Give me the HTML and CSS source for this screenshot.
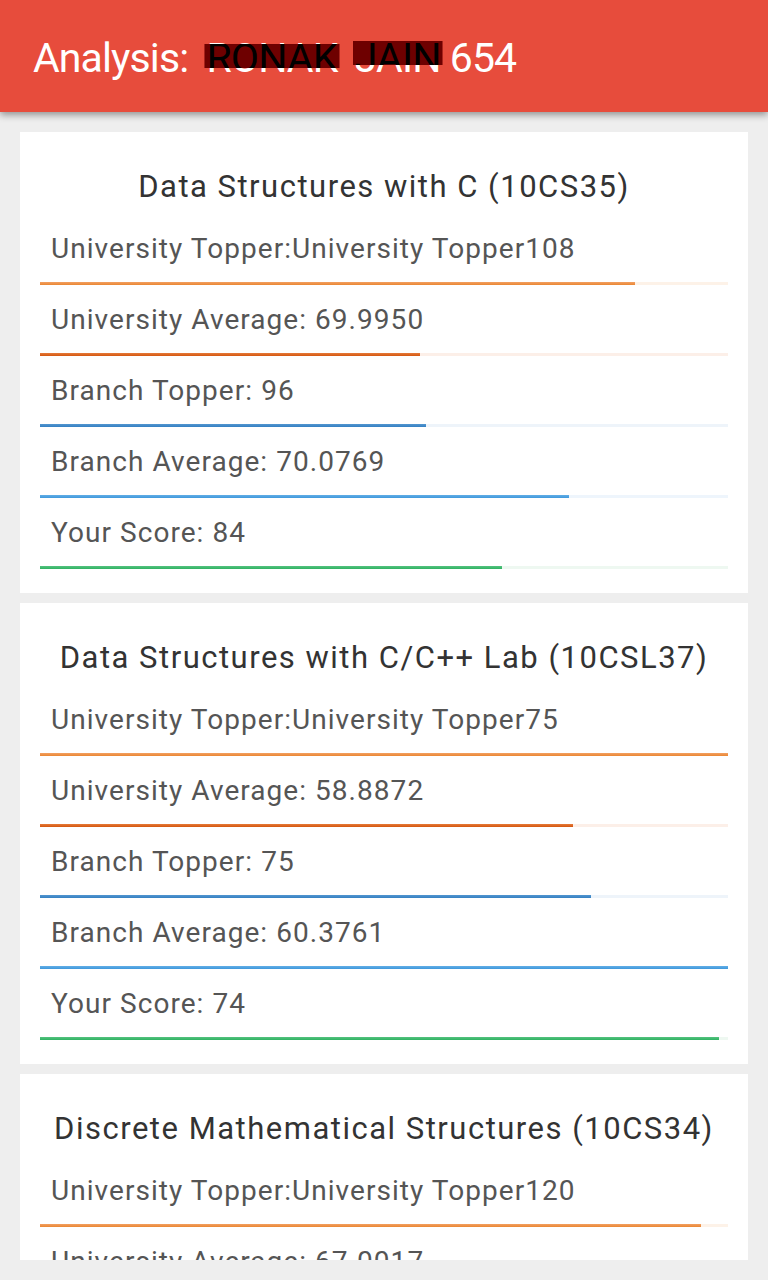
FILE: index.html
```html
<!DOCTYPE html>
<html>
<head>
<meta charset="utf-8">
<link rel="stylesheet" href="styles.css">
</head>
<body>
<header class="appbar">
  <h1 class="appbar-title">Analysis: <span class="redact r1" data-t="RONAK">RONAK</span> <span class="redact r2" data-t="JAIN">JAIN</span> <span class="roll">654</span></h1>
</header>
<main class="content">
  <section class="card">
    <h2 class="card-title">Data Structures with C (10CS35)</h2>
    <div class="row"><div class="label">University Topper:University Topper108</div><div class="bar ut"><div class="fill" style="width:595px"></div></div></div>
    <div class="row"><div class="label">University Average: 69.9950</div><div class="bar ua"><div class="fill" style="width:380px"></div></div></div>
    <div class="row"><div class="label">Branch Topper: 96</div><div class="bar bt"><div class="fill" style="width:386px"></div></div></div>
    <div class="row"><div class="label">Branch Average: 70.0769</div><div class="bar ba"><div class="fill" style="width:529px"></div></div></div>
    <div class="row"><div class="label">Your Score: 84</div><div class="bar ys"><div class="fill" style="width:462px"></div></div></div>
  </section>
  <section class="card">
    <h2 class="card-title">Data Structures with C/C++ Lab (10CSL37)</h2>
    <div class="row"><div class="label">University Topper:University Topper75</div><div class="bar ut"><div class="fill" style="width:688px"></div></div></div>
    <div class="row"><div class="label">University Average: 58.8872</div><div class="bar ua"><div class="fill" style="width:533px"></div></div></div>
    <div class="row"><div class="label">Branch Topper: 75</div><div class="bar bt"><div class="fill" style="width:551px"></div></div></div>
    <div class="row"><div class="label">Branch Average: 60.3761</div><div class="bar ba"><div class="fill" style="width:688px"></div></div></div>
    <div class="row"><div class="label">Your Score: 74</div><div class="bar ys"><div class="fill" style="width:679px"></div></div></div>
  </section>
  <section class="card">
    <h2 class="card-title">Discrete Mathematical Structures (10CS34)</h2>
    <div class="row"><div class="label">University Topper:University Topper120</div><div class="bar ut"><div class="fill" style="width:661px"></div></div></div>
    <div class="row"><div class="label">University Average: 67.0017</div><div class="bar ua"><div class="fill" style="width:368px"></div></div></div>
  </section>
</main>
</body>
</html>
```

FILE: styles.css
```css
html, body {
  margin: 0;
  padding: 0;
}
body {
  width: 768px;
  height: 1280px;
  overflow: hidden;
  background: #eeeeee;
  font-family: Roboto, "Noto Sans", sans-serif;
}
.appbar {
  position: relative;
  z-index: 2;
  height: 112px;
  box-sizing: border-box;
  padding: 4px 0 0 33px;
  display: flex;
  align-items: center;
  background: #e74c3c;
  box-shadow: 0 3px 7px rgba(0, 0, 0, 0.38);
}
.appbar-title {
  margin: 0;
  font-size: 41px;
  font-weight: 400;
  letter-spacing: -0.9px;
  color: #ffffff;
  line-height: normal;
  white-space: nowrap;
}
.redact {
  position: relative;
}
.r1 {
  margin-left: 9px;
}
.r2 {
  margin-left: 8px;
}
.roll {
  margin-left: 0;
}
.redact::after {
  content: attr(data-t);
  position: absolute;
  left: -2px;
  right: -2px;
  top: 0;
  bottom: 0;
  padding-left: 2px;
  color: #000000;
  background: #6e0000;
}
.r1::after {
  clip-path: inset(10px 0 14px 0);
}
.r2::after {
  clip-path: inset(7px 0 17px 0);
}
.content {
  height: 1148px;
  box-sizing: border-box;
  overflow: hidden;
  padding: 20px 20px 0 20px;
  display: flex;
  flex-direction: column;
  gap: 10px;
}
.card {
  flex: none;
  background: #ffffff;
  padding: 35px 0 24px 0;
}
.card-title {
  margin: 0 0 7px 0;
  font-size: 31px;
  line-height: 40px;
  font-weight: 400;
  letter-spacing: 1.5px;
  color: #333333;
  text-align: center;
}
.row {
  display: flex;
  flex-direction: column;
}
.label {
  padding: 15px 0 0 31px;
  margin-bottom: 13px;
  font-size: 28px;
  line-height: 40px;
  letter-spacing: 1.05px;
  color: #555555;
  white-space: nowrap;
}
.bar {
  height: 3px;
  margin: 0 20px;
}
.fill {
  height: 100%;
}
.ut { background: #fdf2e8; }
.ut .fill { background: linear-gradient(#f2a062, #ea8632); }
.ua { background: #fcefe8; }
.ua .fill { background: linear-gradient(#e57a3a, #d4560f); }
.bt { background: #eef4fa; }
.bt .fill { background: linear-gradient(#5296d0, #3580c2); }
.ba { background: #eef5fc; }
.ba .fill { background: linear-gradient(#62aee6, #3f98dc); }
.ys { background: #eef8f1; }
.ys .fill { background: linear-gradient(#55c27f, #2fb262); }
```
